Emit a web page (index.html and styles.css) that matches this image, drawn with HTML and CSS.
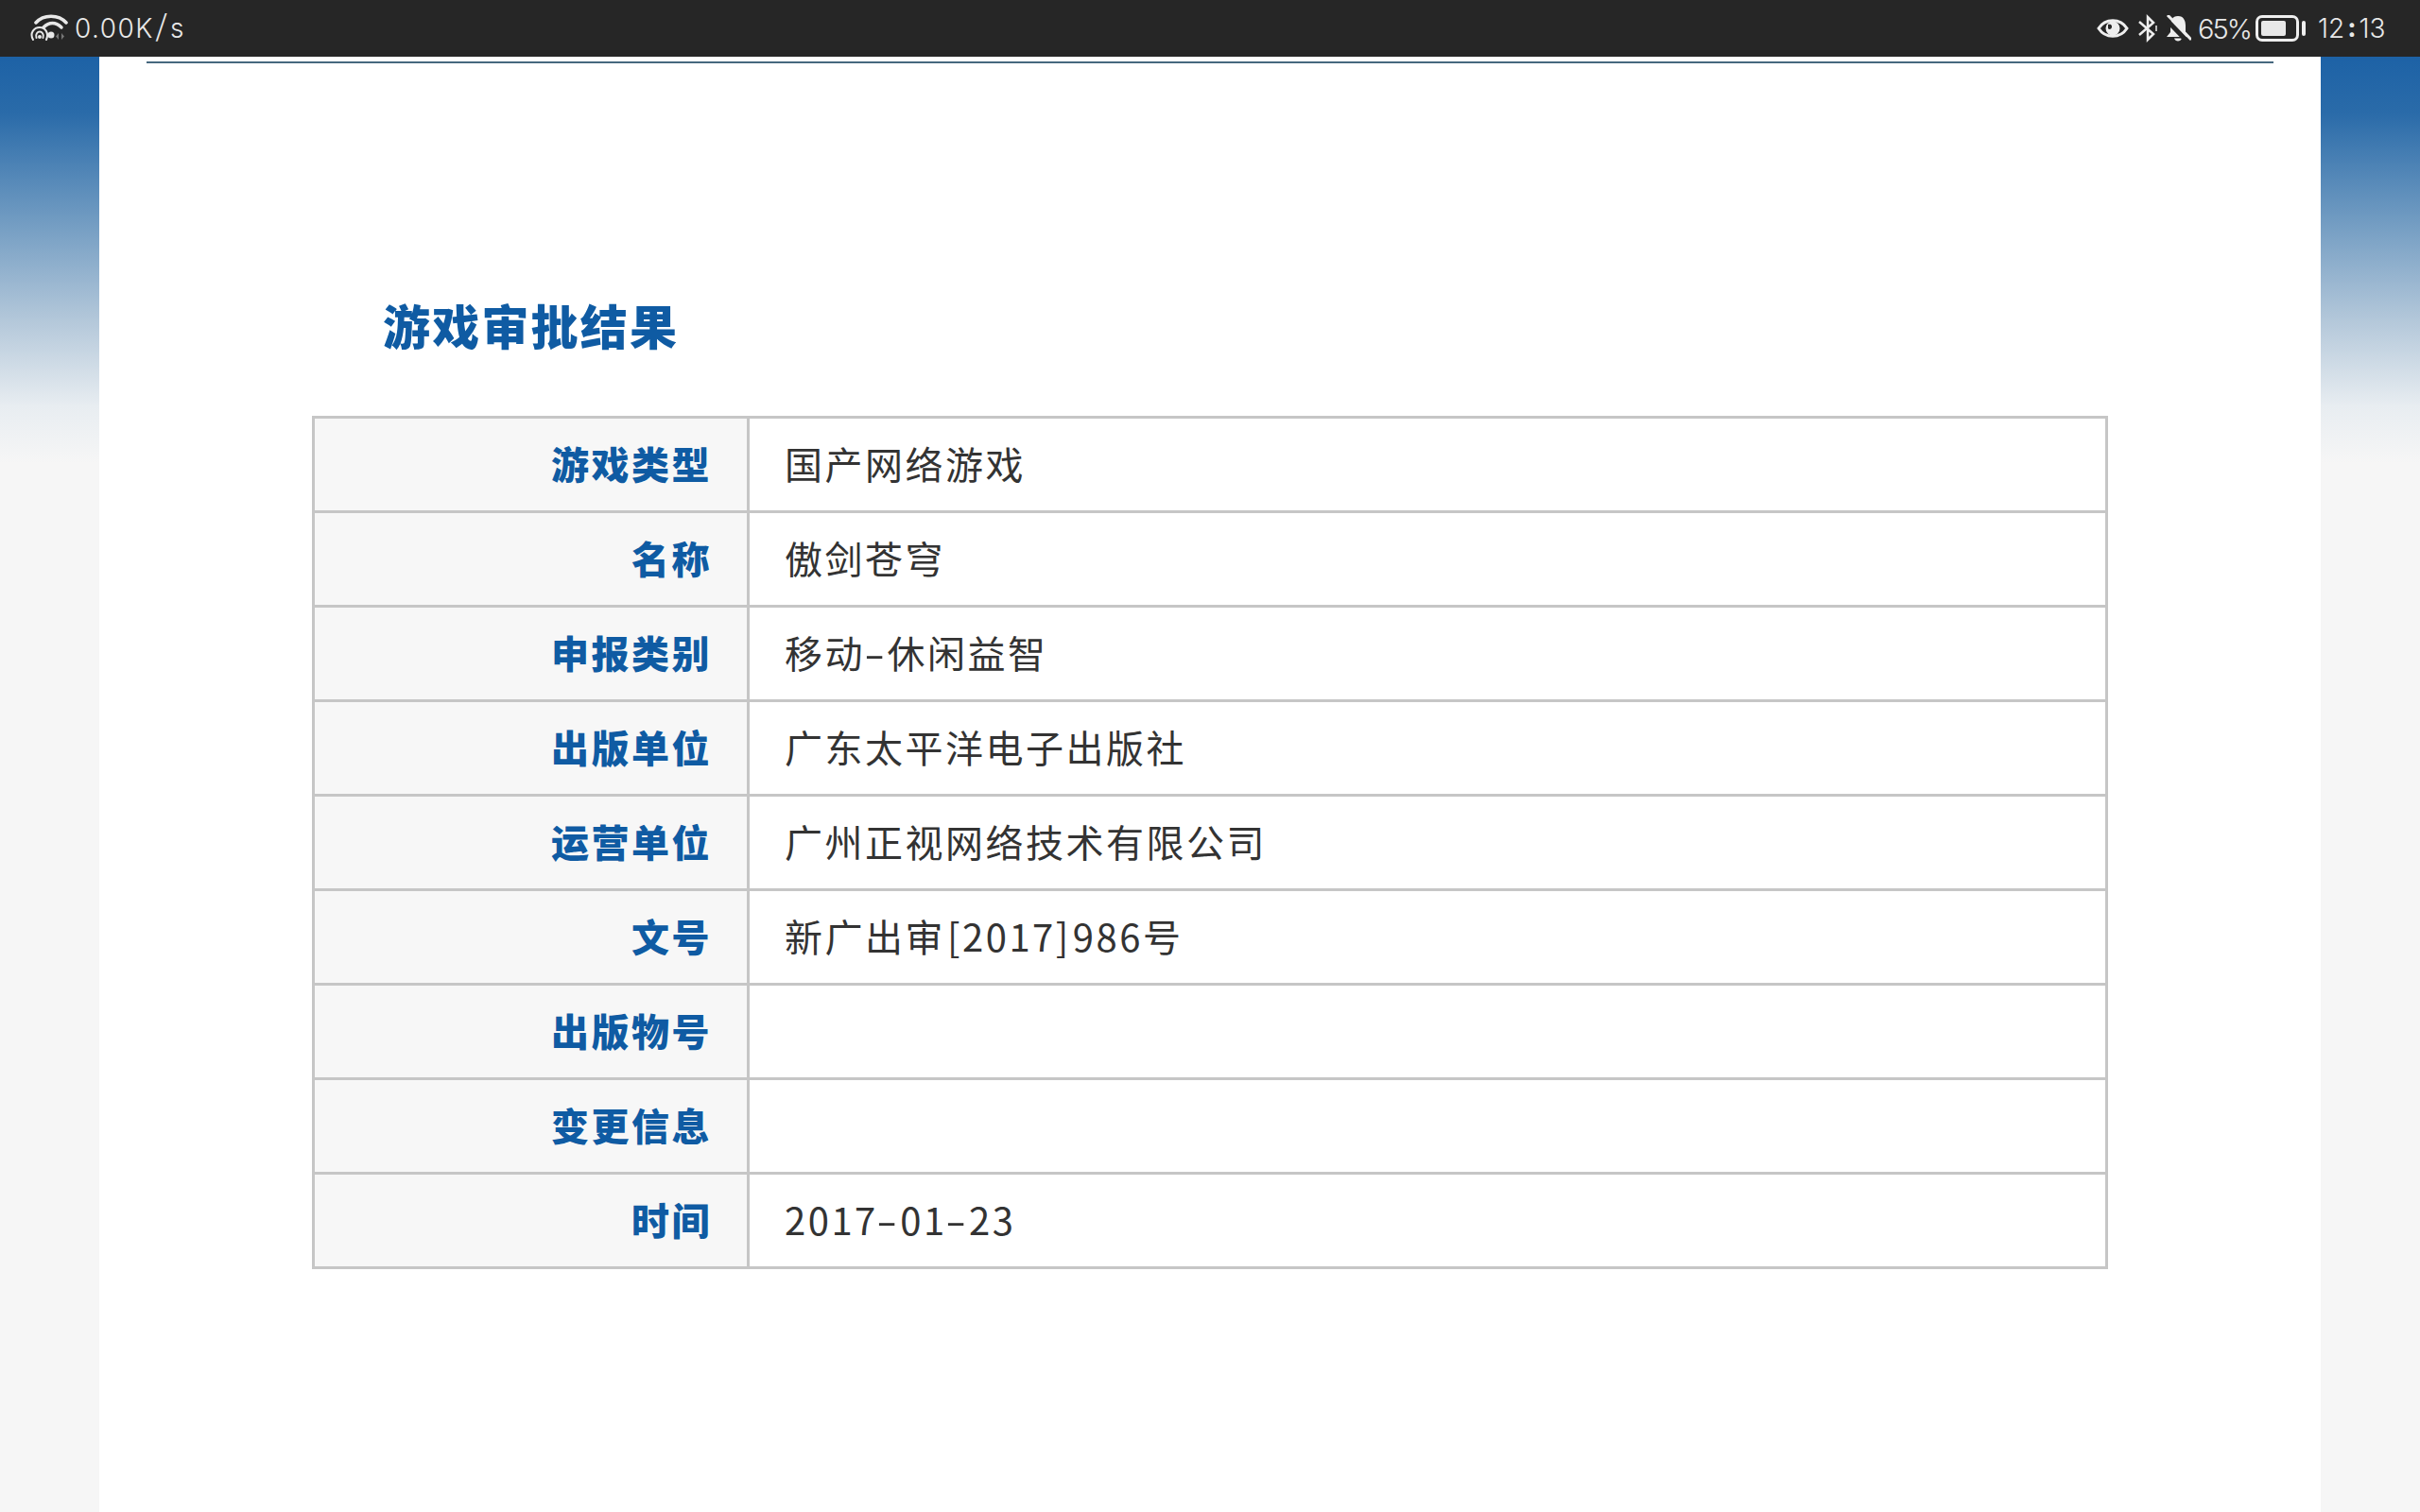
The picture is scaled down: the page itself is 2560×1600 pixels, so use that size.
FILE: index.html
```html
<!DOCTYPE html>
<html lang="zh-CN">
<head>
<meta charset="utf-8">
<title>游戏审批结果</title>
<link rel="stylesheet" href="styles.css">
</head>
<body>
<div class="status">
  <div class="status-left">
    <svg class="ic-wifi" viewBox="0 0 40 30" width="40" height="30">
      <g fill="none" stroke="#e8e8e8" stroke-linecap="round">
        <path d="M6 9 C14 0 30 0 38 9" stroke-width="3.500"/>
        <path d="M14 14 C20 8 27 8 33 14" stroke-width="3.500"/>
        <path d="M3 27 C-1 20 4 14 10 14 C16 14 20 20 17 27" stroke-width="2"/>
        <path d="M6.500 25 C5 21 8 18.500 10 18.500 C12 18.500 15 21 13.500 25" stroke-width="2"/>
      </g>
      <circle cx="10" cy="24" r="2" fill="#e8e8e8"/>
      <circle cx="22" cy="22" r="3.500" fill="#e8e8e8"/>
      <path d="M30 20 L30 27 L27 23.500 Z M33 20 L33 27 L36 23.500 Z" fill="#777"/>
    </svg>
    <span class="speed">0.00K<span class="slash">/</span>s</span>
  </div>
  <div class="status-right">
    <svg class="ic-eye" viewBox="0 0 34 24" width="34" height="24">
      <path d="M2 12 C9 1 25 1 32 12 C25 23 9 23 2 12 Z" fill="none" stroke="#eee" stroke-width="3"/>
      <circle cx="17" cy="12" r="7.500" fill="#eee"/>
      <path d="M12 8 C15 7 17 9 15.500 12 C14 13.500 12.500 13 12 12 Z" fill="#262626"/>
    </svg>
    <svg class="ic-bt" viewBox="0 0 22 30" width="22" height="30">
      <path d="M2 8 L17 21 L11 27 L11 3 L17 9 L2 22" fill="none" stroke="#eee" stroke-width="2.500"/>
      <path d="M20 12 L20 18" stroke="#eee" stroke-width="1.500"/>
    </svg>
    <svg class="ic-bell" viewBox="0 0 27 28" width="27" height="28">
      <path d="M13 1 C7 1 5 6 5 11 L5 18 L1 23 L25 23 L21 18 L21 11 C21 6 19 1 13 1 Z M9 24.500 L17 24.500 C16 28.500 10 28.500 9 24.500 Z" fill="#eee"/>
      <path d="M-1 3 L24 29" stroke="#262626" stroke-width="5"/>
      <path d="M2 0 L27 26" stroke="#eee" stroke-width="3"/>
    </svg>
    <span class="pct">65%</span>
    <div class="battery"><div class="battery-shell"><div class="battery-fill"></div></div><div class="battery-cap"></div></div>
    <span class="clock">12<span class="colon">:</span>13</span>
  </div>
</div>
<div class="page">
  <div class="side"></div>
  <main class="content">
    <div class="rule"></div>
    <h1 class="title">游戏审批结果</h1>
    <table class="info">
      <tr><th>游戏类型</th><td>国产网络游戏</td></tr>
      <tr><th>名称</th><td>傲剑苍穹</td></tr>
      <tr><th>申报类别</th><td>移动<span class="hy">-</span>休闲益智</td></tr>
      <tr><th>出版单位</th><td>广东太平洋电子出版社</td></tr>
      <tr><th>运营单位</th><td>广州正视网络技术有限公司</td></tr>
      <tr><th>文号</th><td>新广出审<span class="code">[2017]</span>986号</td></tr>
      <tr><th>出版物号</th><td></td></tr>
      <tr><th>变更信息</th><td></td></tr>
      <tr><th>时间</th><td>2017<span class="hy">-</span>01<span class="hy">-</span>23</td></tr>
    </table>
  </main>
  <div class="side"></div>
</div>
</body>
</html>
```
FILE: styles.css
```css
* { box-sizing: border-box; }
html, body { margin: 0; height: 1600px; overflow: hidden; }
body {
  background: #f6f6f6;
  font-family: "Noto Sans CJK SC", "Noto Sans", sans-serif;
}
.status {
  height: 60px;
  background: #262626;
  color: #e8e8e8;
  display: flex;
  justify-content: space-between;
  align-items: center;
  padding: 0 35px 0 32px;
  font-family: Inter, sans-serif;
  font-weight: 300;
}
.status-left, .status-right { display: flex; align-items: center; }
.speed { margin-left: 7px; font-size: 28px; letter-spacing: 1.500px; }
.slash { display: inline-block; font-size: 34px; line-height: 28px; transform: scaleX(1.25); margin: 0 2px; font-weight: 200; }
.ic-eye { margin-right: 9px; }
.ic-bt { margin-right: 8px; }
.ic-bell { margin-right: 7px; }
.pct { font-size: 29px; letter-spacing: -2px; width: 53px; white-space: nowrap; }
.battery { display: flex; align-items: center; margin-left: 8px; }
.battery-shell { width: 46px; height: 28px; border: 3px solid #eee; border-radius: 7px; padding: 3px; }
.battery-fill { width: 26px; height: 100%; background: #e8e8e8; border-radius: 2px; }
.battery-cap { width: 4px; height: 16px; margin-left: 3px; background: #eee; border-radius: 2px; }
.clock { margin-left: 13px; font-size: 28px; letter-spacing: 0; width: 73px; white-space: nowrap; }
.colon { display: inline-block; margin: 0 3px; font-weight: 700; transform: translateY(-1px); }
.page { display: flex; height: 1540px; }
.side {
  width: 105px;
  background: linear-gradient(#1d62a6 0, #2a6ba9 60px, #6f9ac1 170px, #b4c8da 280px, #e8edf1 370px, #f6f6f6 430px);
}
.content { flex: 1; background: #fff; padding: 5px 50px 0; }
.rule { height: 2px; background: #46687f; }
.title {
  margin: 236px 0 0 250px;
  height: 80px;
  font-size: 50px;
  line-height: 80px;
  font-weight: 900;
  letter-spacing: 2.200px;
  color: #0f5ba3;
}
.info {
  margin: 57px 0 0 175px;
  width: 1900px;
  border-collapse: collapse;
  table-layout: fixed;
  border: 3px solid #c6c6c6;
}
.info tr { height: 100px; }
.info th, .info td { border: 3px solid #c6c6c6; padding: 0 0 3px; font-size: 40px; letter-spacing: 2.500px; }
.info th {
  width: 460px;
  padding-right: 37px;
  text-align: right;
  background: #f7f7f7;
  color: #0f5ba3;
  font-weight: 900;
}
.info td { padding-left: 37px; color: #333; font-weight: 400; }
.hy { display: inline-block; margin: 0 3.500px; transform: scaleX(1.600); }
.code { padding: 0 2px; }
```
